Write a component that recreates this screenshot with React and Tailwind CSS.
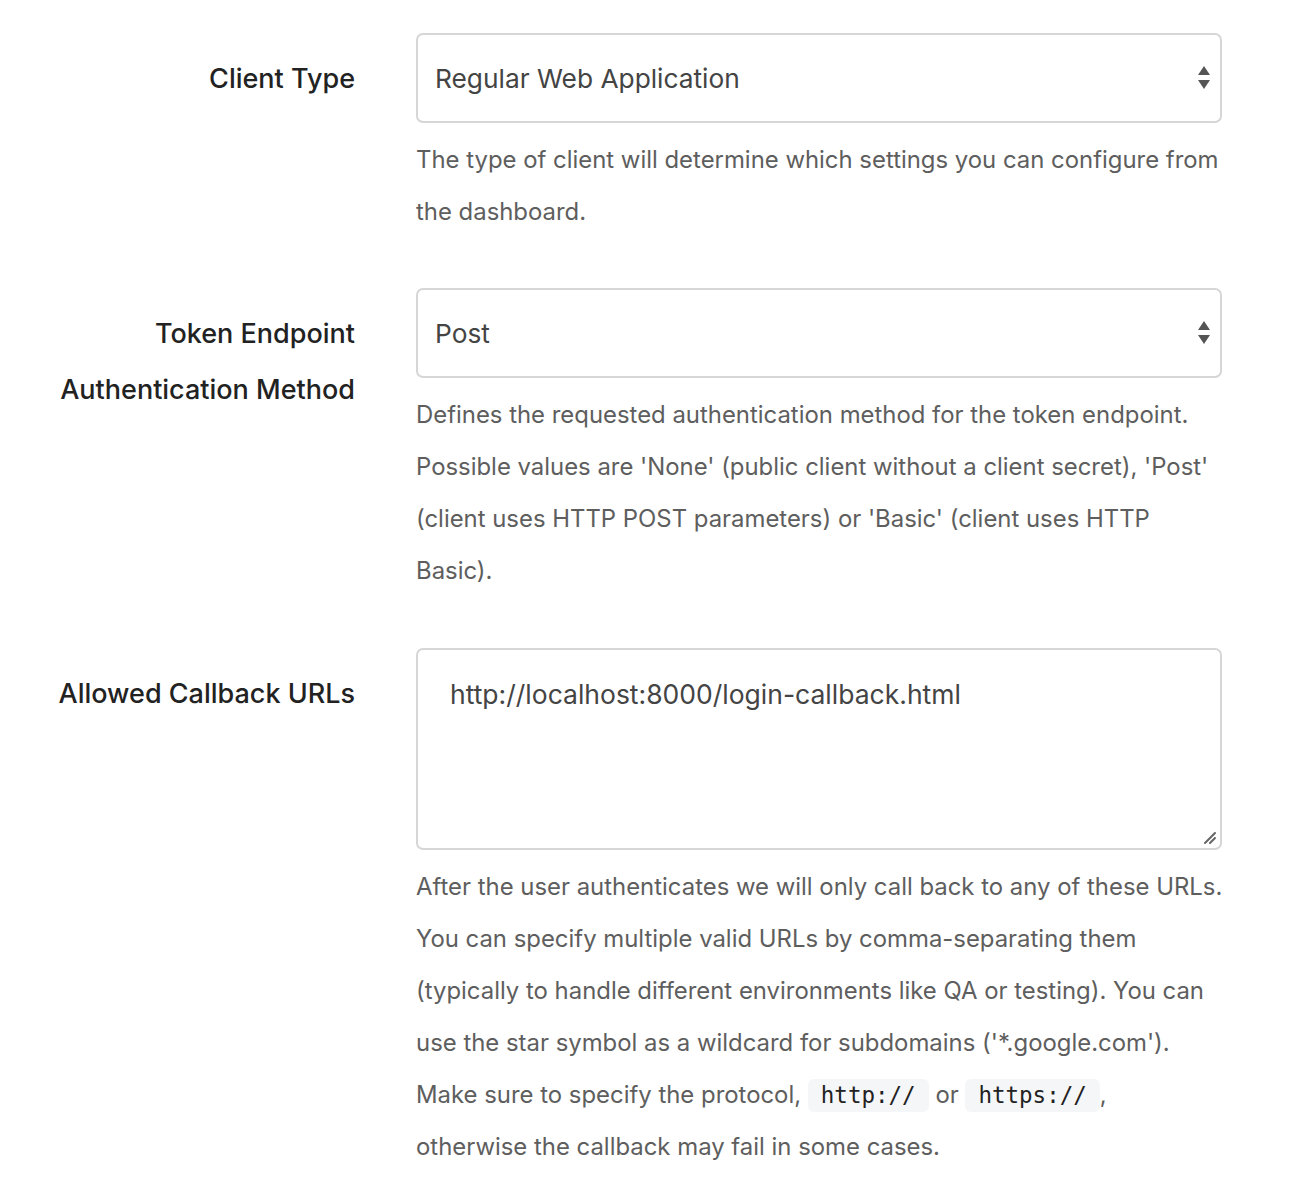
import React from "react";

function Arrows() {
  return (
    <svg width="14" height="26" viewBox="0 0 14 26" className="absolute right-[9px] top-1/2 -translate-y-1/2">
      <path d="M7 1 L13 10 L1 10 Z" fill="#555" />
      <path d="M1 15 L13 15 L7 24 Z" fill="#555" />
    </svg>
  );
}

function Select({ value }) {
  return (
    <div className="relative h-[90px] w-full rounded-[7px] border-2 border-[#d6d6d6] bg-white flex items-center pl-[17px] pt-[2px] text-[26.3px] text-[#444]">
      {value}
      <Arrows />
    </div>
  );
}

function Help({ lines }) {
  return (
    <div className="mt-[11px] text-[23.9px] leading-[52px] text-[#5e5e5e]">
      {lines.map((l, i) => (
        <div key={i} className="whitespace-nowrap">{l}</div>
      ))}
    </div>
  );
}

function Code({ children }) {
  return (
    <code className="inline-block rounded-[6px] bg-[#f5f6f8] px-[13px] leading-[33px] text-[22.5px] text-[#222] font-['DejaVu_Sans_Mono',monospace]">
      {children}
    </code>
  );
}

function Row({ label, children, className = "" }) {
  return (
    <div className={"grid grid-cols-[355px_806px] gap-x-[61px] " + className}>
      <div className="pt-[18px] text-right text-[27px] leading-[56px] font-medium text-[#222]">{label}</div>
      <div>{children}</div>
    </div>
  );
}

export default function App() {
  return (
    <div className="min-h-[1180px] bg-white pt-[33px] font-['Inter',sans-serif]">
      <Row label="Client Type">
        <Select value="Regular Web Application" />
        <Help
          lines={[
            "The type of client will determine which settings you can configure from",
            "the dashboard.",
          ]}
        />
      </Row>
      <Row label={<>Token Endpoint<br />Authentication Method</>} className="mt-[50px]">
        <Select value="Post" />
        <Help
          lines={[
            "Defines the requested authentication method for the token endpoint.",
            "Possible values are 'None' (public client without a client secret), 'Post'",
            "(client uses HTTP POST parameters) or 'Basic' (client uses HTTP",
            "Basic).",
          ]}
        />
      </Row>
      <Row label="Allowed Callback URLs" className="mt-[51px]">
        <div className="relative h-[202px] w-full rounded-[7px] border-2 border-[#d6d6d6] bg-white pl-[32px] pt-[28px] text-[26.5px] leading-[32px] text-[#444]">
          http://localhost:8000/login-callback.html
          <svg width="14" height="14" viewBox="0 0 14 14" className="absolute right-[3px] bottom-[3px]">
            <path d="M2 12 L12 2 M7 12 L12 7" stroke="#666" strokeWidth="2" strokeLinecap="round" />
          </svg>
        </div>
        <Help
          lines={[
            "After the user authenticates we will only call back to any of these URLs.",
            "You can specify multiple valid URLs by comma-separating them",
            "(typically to handle different environments like QA or testing). You can",
            "use the star symbol as a wildcard for subdomains ('*.google.com').",
            <>Make sure to specify the protocol, <Code>http://</Code> or <Code>https://</Code>,</>,
            "otherwise the callback may fail in some cases.",
          ]}
        />
      </Row>
    </div>
  );
}
